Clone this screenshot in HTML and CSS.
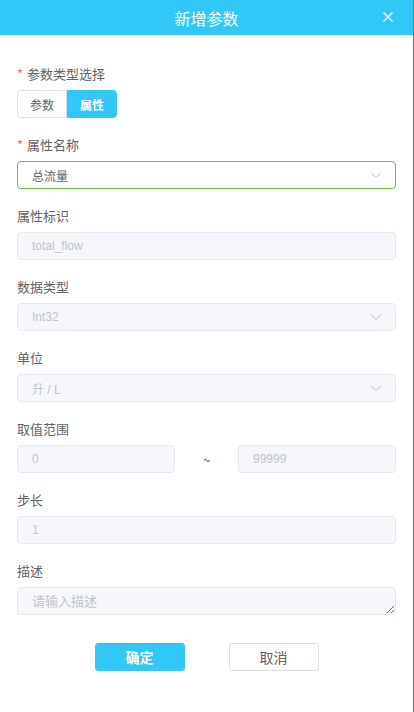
FILE: index.html
```html
<!DOCTYPE html>
<html lang="zh-CN">
<head>
	<meta charset="UTF-8">
	<meta name="viewport" content="width=device-width, initial-scale=1.0">
	<title>新增参数</title>
	<link rel="stylesheet" href="styles.css">
</head>
<body>
	<div class="dialog">
		<div class="dialog-header">
			<span class="dialog-title">新增参数</span>
			<span class="dialog-close">
				<svg width="12" height="12" viewBox="0 0 12 12"><path d="M1.5 1.5 L10.5 10.5 M10.5 1.5 L1.5 10.5" stroke="#fff" stroke-width="1.4" fill="none"/></svg>
			</span>
		</div>

		<div class="dialog-body">
			<div class="form-item">
				<div class="form-label required">参数类型选择</div>
				<div class="radio-group">
					<div class="radio-btn">参数</div>
					<div class="radio-btn active">属性</div>
				</div>
			</div>

			<div class="form-item">
				<div class="form-label required">属性名称</div>
				<div class="input select focus">
					<span class="value">总流量</span>
					<svg class="arrow" width="12" height="7" viewBox="0 0 12 7"><path d="M1 1 L6 5.5 L11 1" stroke="#c0c4cc" stroke-width="1" fill="none"/></svg>
				</div>
			</div>

			<div class="form-item">
				<div class="form-label">属性标识</div>
				<div class="input disabled"><span class="value">total_flow</span></div>
			</div>

			<div class="form-item">
				<div class="form-label">数据类型</div>
				<div class="input select disabled">
					<span class="value">Int32</span>
					<svg class="arrow" width="12" height="7" viewBox="0 0 12 7"><path d="M1 1 L6 5.5 L11 1" stroke="#c0c4cc" stroke-width="1" fill="none"/></svg>
				</div>
			</div>

			<div class="form-item">
				<div class="form-label">单位</div>
				<div class="input select disabled">
					<span class="value">升 / L</span>
					<svg class="arrow" width="12" height="7" viewBox="0 0 12 7"><path d="M1 1 L6 5.5 L11 1" stroke="#c0c4cc" stroke-width="1" fill="none"/></svg>
				</div>
			</div>

			<div class="form-item">
				<div class="form-label">取值范围</div>
				<div class="range">
					<div class="input disabled"><span class="value">0</span></div>
					<span class="range-sep">~</span>
					<div class="input disabled"><span class="value">99999</span></div>
				</div>
			</div>

			<div class="form-item">
				<div class="form-label">步长</div>
				<div class="input disabled"><span class="value">1</span></div>
			</div>

			<div class="form-item">
				<div class="form-label">描述</div>
				<textarea class="textarea" rows="1" placeholder="请输入描述" disabled></textarea>
			</div>

			<div class="dialog-footer">
				<button class="btn btn-primary">确定</button>
				<button class="btn">取消</button>
			</div>
		</div>
	</div>
</body>
</html>
```

FILE: styles.css
```css
html, body {
	padding: 0;
	margin: 0;
}

body {
	background: #fff;
	font-family: "Noto Sans CJK SC", "Noto Sans", sans-serif;
	color: #606266;
}

.dialog {
	width: 413px;
	height: 712px;
	border-right: 1px solid #6f6f6f;
	background: #fff;
}

.dialog-header {
	height: 35px;
	background: #31c8f7;
	display: flex;
	align-items: center;
	justify-content: center;
	position: relative;
}

.dialog-title {
	color: #fff;
	font-size: 16px;
}

.dialog-close {
	position: absolute;
	right: 19px;
	top: 11px;
	display: flex;
}

.dialog-body {
	padding: 30px 17px 0 17px;
}

.form-item {
	margin-bottom: 18px;
}

.form-label {
	font-size: 13px;
	line-height: 17px;
	height: 17px;
	margin-bottom: 8px;
	color: #606266;
}

.form-label.required::before {
	content: "*";
	color: #f56c6c;
	margin-right: 4px;
}

.radio-group {
	display: flex;
}

.radio-btn {
	width: 50px;
	height: 28px;
	box-sizing: border-box;
	border: 1px solid #dcdfe6;
	font-size: 12px;
	display: flex;
	align-items: center;
	justify-content: center;
	color: #606266;
	border-radius: 4px 0 0 4px;
}

.radio-btn.active {
	background: #31c8f7;
	border-color: #31c8f7;
	color: #fff;
	font-weight: bold;
	border-radius: 0 4px 4px 0;
}

.input {
	height: 28px;
	box-sizing: border-box;
	border: 1px solid #dcdfe6;
	border-radius: 4px;
	display: flex;
	align-items: center;
	padding: 0 14px;
	font-size: 12px;
	font-family: "Liberation Sans", "Noto Sans CJK SC", sans-serif;
	color: #606266;
}

.input .value {
	flex: 1;
}

.input.focus {
	border-color: #67c23a;
}

.input.disabled {
	background: #f5f7fa;
	border-color: #e4e7ed;
	color: #c0c4cc;
}

.input .arrow {
	margin-right: -1px;
}

.range {
	display: flex;
	align-items: center;
}

.range .input {
	width: 158px;
}

.range-sep {
	flex: 1;
	text-align: center;
	font-size: 13px;
	color: #606266;
}

.textarea {
	display: block;
	width: 100%;
	height: 28px;
	box-sizing: border-box;
	border: 1px solid #e4e7ed;
	border-radius: 4px;
	background: #f5f7fa;
	padding: 4px 14px;
	font-size: 13px;
	line-height: 18px;
	font-family: "Noto Sans CJK SC", sans-serif;
	color: #c0c4cc;
	margin: 0;
}

.textarea::placeholder {
	color: #c0c4cc;
}

.dialog-footer {
	display: flex;
	justify-content: center;
	gap: 44px;
	padding-top: 10px;
}

.btn {
	width: 90px;
	height: 28px;
	box-sizing: border-box;
	border: 1px solid #dcdfe6;
	border-radius: 3px;
	background: #fff;
	font-size: 14px;
	font-family: "Noto Sans CJK SC", sans-serif;
	color: #606266;
	padding: 0;
}

.btn-primary {
	background: #31c8f7;
	border-color: #31c8f7;
	color: #fff;
	font-weight: bold;
}
```
